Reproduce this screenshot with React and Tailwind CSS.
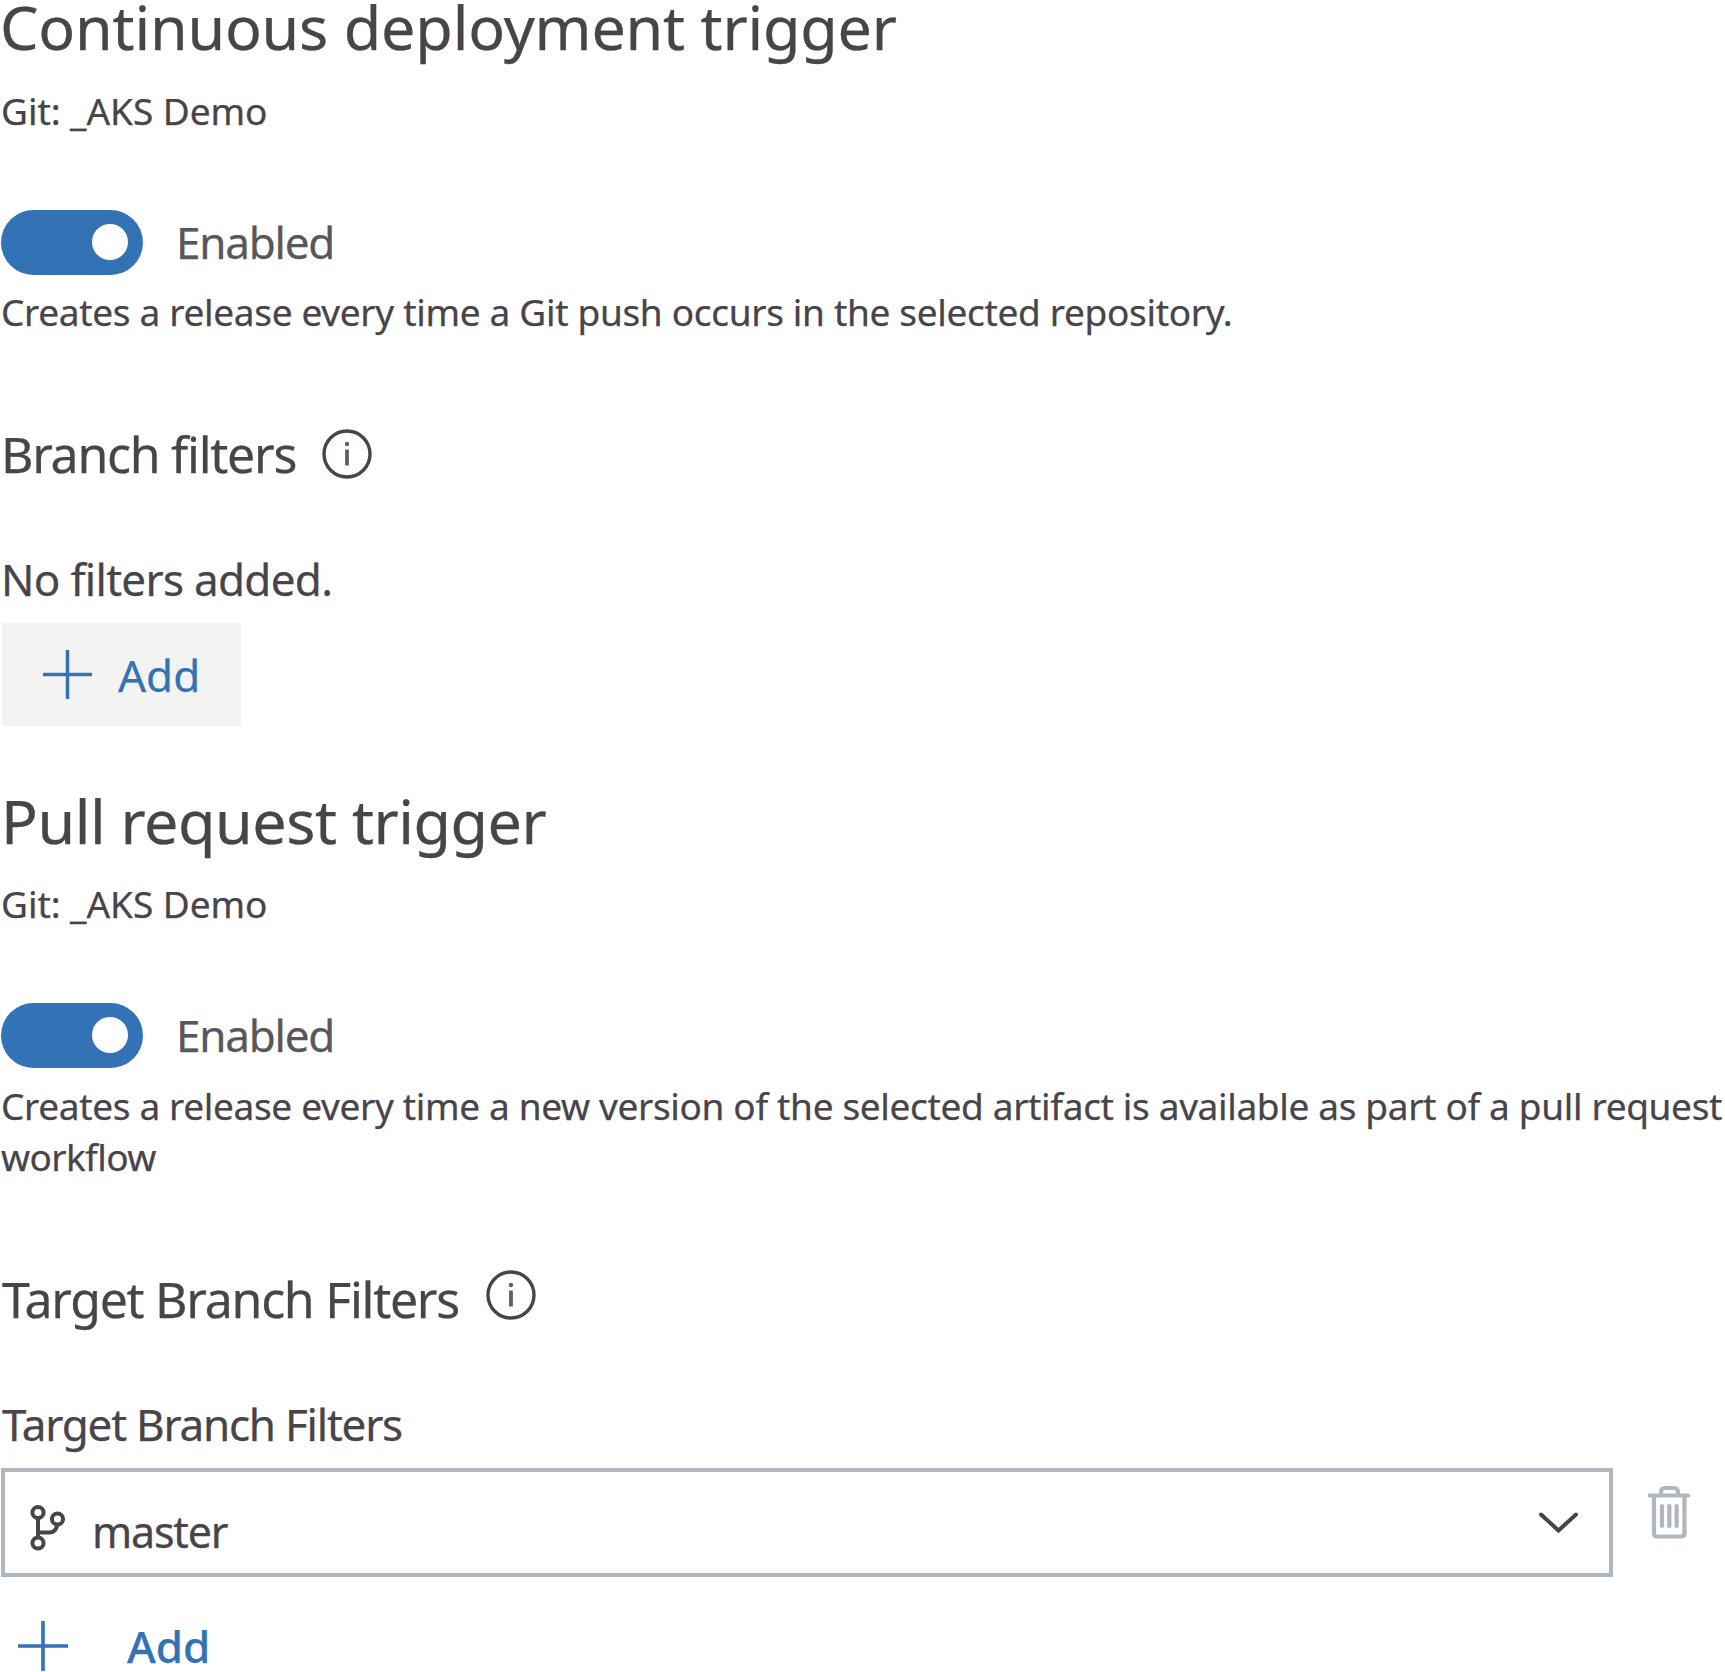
import React from "react";

function InfoIcon({ className = "" }) {
  return (
    <svg viewBox="0 0 50 50" className={`size-[50px] shrink-0 ${className}`} fill="none">
      <circle cx="25" cy="25" r="23" stroke="#48444a" strokeWidth="3.4" />
      <circle cx="25" cy="15" r="2.2" fill="#625e63" />
      <path d="M25 20.5V36.5" stroke="#625e63" strokeWidth="3.8" />
    </svg>
  );
}

function PlusIcon({ className = "" }) {
  return (
    <svg viewBox="0 0 50 50" className={`shrink-0 ${className}`} fill="none" stroke="#3373b5" strokeWidth="3.6">
      <path d="M25 0V50M0 25H50" />
    </svg>
  );
}

function BranchIcon() {
  return (
    <svg viewBox="0 0 36 48" className="h-[48px] w-[36px] shrink-0" fill="none" stroke="#48444a" strokeWidth="4">
      <circle cx="8" cy="8.5" r="5.6" />
      <circle cx="8" cy="39" r="5.6" />
      <circle cx="27.5" cy="15" r="5.6" />
      <path d="M8 14V33M8 28.5H19.5C24 28.5 26.5 25 27.5 20.5" />
    </svg>
  );
}

function ChevronIcon() {
  return (
    <svg viewBox="0 0 40 22" className="h-[22px] w-[40px] shrink-0" fill="none" stroke="#48444a" strokeWidth="4" strokeLinecap="round">
      <path d="M3 2.5L20.5 18.5L38 2.5" />
    </svg>
  );
}

function TrashIcon() {
  return (
    <svg viewBox="0 0 42 54" className="h-[54px] w-[42px] shrink-0" fill="none" stroke="#b0b7bf" strokeWidth="4.2">
      <path d="M2 10.5H40" strokeLinecap="round" />
      <path d="M13 10V7C13 4.5 14.5 3 17 3H26C28.5 3 30 4.5 30 7V10" />
      <path d="M6 10.5V48.5C6 50.5 7 51.5 9 51.5H33.5C35.5 51.5 36.5 50.5 36.5 48.5V10.5" />
      <path d="M14 21V41M21.3 21V41M28.6 21V41" strokeLinecap="round" />
    </svg>
  );
}

function Toggle({ className = "" }) {
  return (
    <div className={`flex h-[66px] items-center ${className}`}>
      <button role="switch" aria-checked="true" className="ml-px flex h-[65px] w-[142px] items-center justify-end rounded-full bg-[#3373b5] pr-[15px]">
        <span className="size-[36px] rounded-full bg-white" />
      </button>
      <span className="ml-[33px] text-[44px] leading-[48px] tracking-[-1.2px] text-[#5a565b]">Enabled</span>
    </div>
  );
}

export default function App() {
  return (
    <main className="flex h-[1672px] w-[1725px] flex-col bg-white font-['Noto_Sans',sans-serif] whitespace-nowrap text-[#48444a] [-webkit-text-stroke:0.25px]">
      <h1 className="mt-px text-[61px] leading-[52px] tracking-[-0.2px]">Continuous deployment trigger</h1>
      <p className="mt-[34px] ml-px text-[37px] leading-[48px] tracking-[-0.05px]">Git: _AKS Demo</p>
      <Toggle className="mt-[74px]" />
      <p className="mt-[11px] ml-px text-[37px] leading-[51px] tracking-[-0.32px]">
        Creates a release every time a Git push occurs in the selected repository.
      </p>

      <div className="mt-[87px] ml-px flex h-[60px] items-center gap-[26px]">
        <h2 className="text-[50px] leading-[60px] tracking-[-1.27px]">Branch filters</h2>
        <InfoIcon />
      </div>
      <p className="mt-[71px] ml-px text-[44px] leading-[48px] tracking-[-0.7px]">No filters added.</p>
      <button className="mt-[20px] ml-[2px] flex h-[103px] w-[239px] items-center gap-[26px] bg-[#f3f3f2] pl-[41px] text-[44px] leading-[48px] text-[#3373b5]">
        <PlusIcon className="size-[49px]" />
        <span>Add</span>
      </button>

      <h1 className="mt-[69px] ml-px text-[61px] leading-[52px] tracking-[-0.47px]">Pull request trigger</h1>
      <p className="mt-[33px] ml-px text-[37px] leading-[48px] tracking-[-0.05px]">Git: _AKS Demo</p>
      <Toggle className="mt-[74px]" />
      <p className="mt-[12px] ml-px text-[37px] leading-[51px] tracking-[-0.34px]">
        Creates a release every time a new version of the selected artifact is available as part of a pull request
        <br />
        <span className="tracking-[-0.6px]">workflow</span>
      </p>

      <div className="mt-[87px] flex h-[60px] items-center gap-[27px]">
        <h2 className="ml-[2px] text-[50px] leading-[60px] tracking-[-1.27px]">Target Branch Filters</h2>
        <InfoIcon className="mb-[8px]" />
      </div>
      <label className="mt-[71px] ml-[2px] text-[44px] leading-[48px] tracking-[-1.22px]">Target Branch Filters</label>
      <div className="mt-[20px] flex h-[109px]">
        <div className="ml-px flex w-[1612px] items-center border-4 border-[#b0b7bf] pr-[31px] pl-[25px]">
          <span className="pt-[11px]">
            <BranchIcon />
          </span>
          <span className="ml-[26px] pt-[18px] text-[43px] leading-[48px] tracking-[-1.2px]">master</span>
          <span className="ml-auto">
            <ChevronIcon />
          </span>
        </div>
        <button className="mt-[17px] ml-[35px] self-start">
          <TrashIcon />
        </button>
      </div>
      <button className="mt-[44px] ml-[18px] flex h-[50px] items-center gap-[59px] text-[44px] leading-[48px] font-medium text-[#3373b5]">
        <PlusIcon className="size-[50px]" />
        <span>Add</span>
      </button>
    </main>
  );
}
